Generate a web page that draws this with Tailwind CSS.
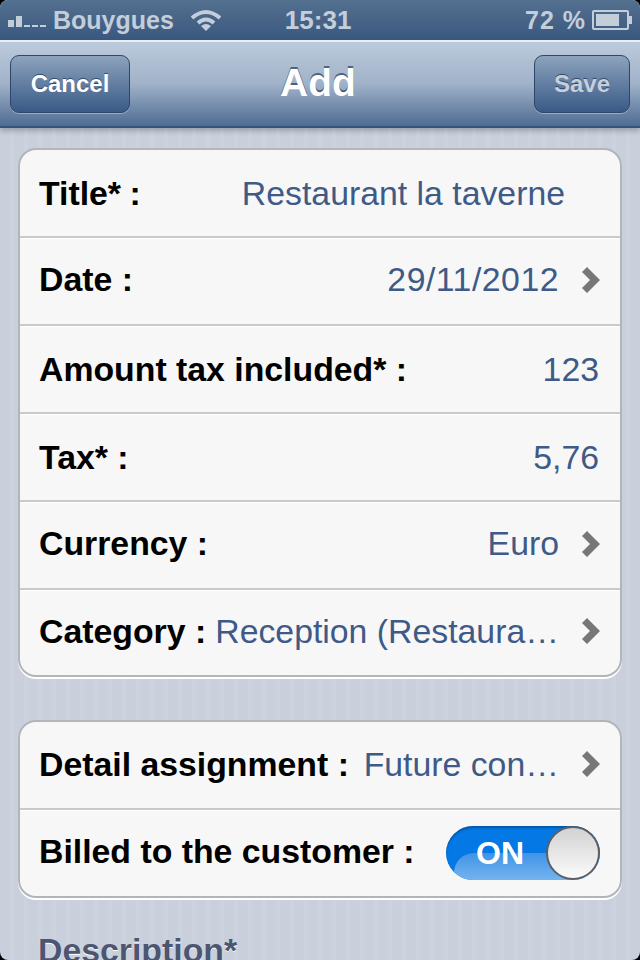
<!DOCTYPE html>
<html lang="en">
<head>
    <meta charset="UTF-8">
    <title>Add</title>
    <script src="https://cdn.jsdelivr.net/npm/@tailwindcss/browser@4"></script>
</head>
<body class="bg-black">
    <div class="w-[640px] h-[960px] overflow-hidden rounded-[8px] flex flex-col font-['Liberation_Sans',Arial,sans-serif] bg-[repeating-linear-gradient(90deg,#c9cfdb_0,#c9cfdb_10px,#cdd3de_10px,#cdd3de_14px)]">
        <!-- Status bar -->
        <div class="h-10 shrink-0 flex items-center bg-gradient-to-b from-[#54708f] to-[#3a5880] text-[#c3cedb] font-bold text-[25px] pl-2 pr-2">
            <div class="flex items-end gap-[2px] w-[39px] h-[11px] mt-[2px]">
                <span class="w-[6px] h-[7px] bg-[#c3cedb]"></span>
                <span class="w-[6px] h-[11px] bg-[#c3cedb]"></span>
                <span class="w-[6px] h-[2px] bg-[#c3cedb]"></span>
                <span class="w-[6px] h-[2px] bg-[#c3cedb]"></span>
                <span class="w-[6px] h-[2px] bg-[#c3cedb]"></span>
            </div>
            <span class="ml-[6px] leading-none">Bouygues</span>
            <svg class="ml-[16px] -mt-[1px]" width="32" height="24" viewBox="0 0 32 24" fill="none" stroke="#c3cedb" stroke-width="4">
                <path d="M2 10 Q16 -2 30 10"/>
                <path d="M8 15 Q16 8 24 15"/>
                <path d="M16 23 L11 18 Q16 14 21 18 Z" fill="#c3cedb" stroke="none"/>
            </svg>
            <span class="ml-[63px] leading-none text-[26px]">15:31</span>
            <span class="ml-auto leading-none tracking-[1px]">72 %</span>
            <div class="ml-[6px] flex items-center">
                <div class="w-[37px] h-[20px] border-[2px] border-[#c3cedb] rounded-[2px] p-[2px]">
                    <div class="w-[23px] h-full bg-[#c3cedb]"></div>
                </div>
                <div class="w-[3px] h-[8px] bg-[#c3cedb]"></div>
            </div>
        </div>

        <!-- Nav bar -->
        <div class="h-[88px] shrink-0 border-t-2 border-[#e9eef4] bg-gradient-to-b from-[#bccbdc] via-[#a0b2c9] to-[#4e6c93] border-b-2 border-b-[#37557c] shadow-[0_3px_5px_rgba(60,70,90,0.35)] grid grid-cols-[1fr_auto_1fr] items-center px-[10px] pb-[1px]">
            <button class="justify-self-start w-[120px] h-[58px] rounded-[9px] border border-[#2f4767] bg-gradient-to-b from-[#8da3bd] to-[#3a5a86] text-white text-[24px] font-bold shadow-[0_1px_0_rgba(255,255,255,0.35)] [text-shadow:0_-1px_0_rgba(30,45,70,0.7)]">Cancel</button>
            <h1 class="text-white text-[39px] font-bold [text-shadow:0_-2px_0_rgba(50,70,100,0.75)] -ml-[4px]">Add</h1>
            <button class="justify-self-end w-[96px] h-[58px] rounded-[9px] border border-[#2f4767] bg-gradient-to-b from-[#8da3bd] to-[#3a5a86] text-[#c5cfdc] text-[24px] font-bold shadow-[0_1px_0_rgba(255,255,255,0.35)] [text-shadow:0_-1px_0_rgba(30,45,70,0.7)]">Save</button>
        </div>

        <!-- Form -->
        <div class="px-[18px] pt-[20px] text-[33.8px]">
            <div class="bg-[#f7f7f7] rounded-[18px] border-2 border-[#b2b5ba] shadow-[0_2px_0_white]">
                <div class="h-[86px] flex items-center pl-[19px] pr-[55px]">
                    <span class="font-bold text-black">Title* <span class="ml-[-1px]">:</span></span>
                    <span class="ml-auto text-[#3f5a87]">Restaurant la taverne</span>
                </div>
                <div class="h-[88px] border-t-2 border-[#c8c9cb] shadow-[inset_0_1px_0_white] flex items-center pb-[3px] pl-[19px] pr-[20px]">
                    <span class="font-bold text-black">Date :</span>
                    <span class="ml-auto text-[#3f5a87] tracking-[0.5px]">29/11/2012</span>
                    <svg class="ml-[23px]" width="18" height="26" viewBox="0 0 18 26"><path d="M0 5 L5 0 L18 13 L5 26 L0 21 L8 13 Z" fill="#777"/></svg>
                </div>
                <div class="h-[88px] border-t-2 border-[#c8c9cb] shadow-[inset_0_1px_0_white] flex items-center justify-between pl-[19px] pr-[21px]">
                    <span class="font-bold text-black">Amount tax included* :</span>
                    <span class="text-[#3f5a87]">123</span>
                </div>
                <div class="h-[88px] border-t-2 border-[#c8c9cb] shadow-[inset_0_1px_0_white] flex items-center justify-between pl-[19px] pr-[21px]">
                    <span class="font-bold text-black">Tax* :</span>
                    <span class="text-[#3f5a87]">5,76</span>
                </div>
                <div class="h-[88px] border-t-2 border-[#c8c9cb] shadow-[inset_0_1px_0_white] flex items-center pb-[3px] pl-[19px] pr-[20px]">
                    <span class="font-bold text-black">Currency :</span>
                    <span class="ml-auto text-[#3f5a87]">Euro</span>
                    <svg class="ml-[23px]" width="18" height="26" viewBox="0 0 18 26"><path d="M0 5 L5 0 L18 13 L5 26 L0 21 L8 13 Z" fill="#777"/></svg>
                </div>
                <div class="h-[87px] border-t-2 border-[#c8c9cb] shadow-[inset_0_1px_0_white] flex items-center pb-[3px] pl-[19px] pr-[20px]">
                    <span class="font-bold text-black">Category :</span>
                    <span class="ml-auto text-[#3f5a87]">Reception (Restaura…</span>
                    <svg class="ml-[23px]" width="18" height="26" viewBox="0 0 18 26"><path d="M0 5 L5 0 L18 13 L5 26 L0 21 L8 13 Z" fill="#777"/></svg>
                </div>
            </div>

            <div class="mt-[43px] bg-[#f7f7f7] rounded-[18px] border-2 border-[#b2b5ba] shadow-[0_2px_0_white]">
                <div class="h-[86px] flex items-center pb-[2px] pl-[19px] pr-[20px]">
                    <span class="font-bold text-black">Detail assignment :</span>
                    <span class="ml-auto text-[#3f5a87]">Future con…</span>
                    <svg class="ml-[23px]" width="18" height="26" viewBox="0 0 18 26"><path d="M0 5 L5 0 L18 13 L5 26 L0 21 L8 13 Z" fill="#777"/></svg>
                </div>
                <div class="h-[88px] border-t-2 border-[#c8c9cb] shadow-[inset_0_1px_0_white] flex items-center justify-between pl-[19px] pr-[20px]">
                    <span class="font-bold text-black -mt-[3px]">Billed to the customer :</span>
                    <div class="relative w-[154px] h-[54px] rounded-full overflow-hidden bg-[#0478e4] shadow-[inset_0_2px_2px_rgba(0,50,110,0.5)] flex items-center">
                        <div class="absolute left-[8px] right-0 bottom-0 h-[27px] rounded-tl-[20px] bg-gradient-to-b from-[#3d93e6] to-[#74b4f0]"></div>
                        <span class="relative ml-[30px] text-white text-[32px] font-bold">ON</span>
                        <div class="absolute right-0 top-0 w-[54px] h-[54px] rounded-full border-2 border-[#5c5f63] bg-gradient-to-b from-[#d2d2d2] to-[#fbfbfb]"></div>
                    </div>
                </div>
            </div>

            <h2 class="mt-[27px] pl-[20px] font-bold text-[#4c5671] [text-shadow:0_1px_0_white]">Description*</h2>
        </div>
    </div>
</body>
</html>
